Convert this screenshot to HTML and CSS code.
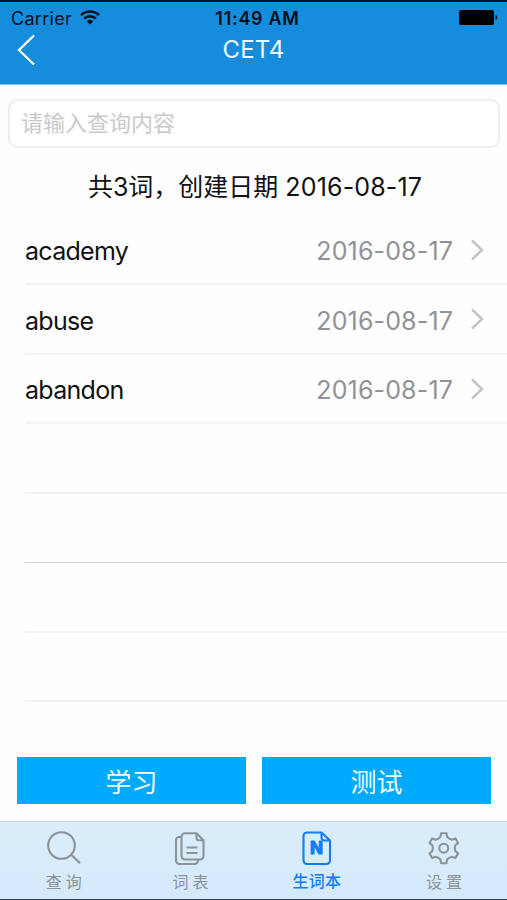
FILE: index.html
```
<!DOCTYPE html>
<html lang="zh-CN">

<head>
    <meta charset="UTF-8">
    <meta name="viewport" content="width=device-width, initial-scale=1.0">
    <title>CET4</title>
    <link rel="stylesheet" href="styles.css">
</head>

<body>
    <header class="header">
        <div class="status">
            <div class="carrier">
                <span>Carrier</span>
                <svg width="20" height="15" viewBox="0 0 20 15" fill="none" stroke="#03101c" stroke-width="2.5">
                    <path d="M1 5.200a13 13 0 0 1 18 0M4.200 8.600a8.300 8.300 0 0 1 11.600 0" />
                    <path d="M6.800 11.200a4.700 4.700 0 0 1 6.400 0L10 14.400z" fill="#03101c" stroke="none" />
                </svg>
            </div>
            <span class="time">11:49 AM</span>
            <svg class="battery" width="39" height="15" viewBox="0 0 39 15">
                <rect width="35" height="15" rx="2" />
                <path d="M36.500 5.200c2.400.7 2.400 3.900 0 4.600z" />
            </svg>
        </div>
        <div class="nav">
            <svg class="back" width="18" height="32" viewBox="0 0 18 32" fill="none" stroke="#fff" stroke-width="2.3">
                <path d="M17 1.500L2 16l15 14.500" />
            </svg>
            <h1 class="title">CET4</h1>
        </div>
    </header>

    <main class="content">
        <input class="search" type="text" placeholder="请输入查询内容">
        <p class="summary">共3词，创建日期 <span class="summary-date">2016-08-17</span></p>

        <ul class="words">
            <li class="row">
                <span class="word">academy</span>
                <span class="date">2016-08-17</span>
                <svg class="arrow" width="13" height="22" viewBox="0 0 13 22"><path d="M1 1.500L11 11 1 20.500" /></svg>
            </li>
            <li class="row">
                <span class="word">abuse</span>
                <span class="date">2016-08-17</span>
                <svg class="arrow" width="13" height="22" viewBox="0 0 13 22"><path d="M1 1.500L11 11 1 20.500" /></svg>
            </li>
            <li class="row">
                <span class="word">abandon</span>
                <span class="date">2016-08-17</span>
                <svg class="arrow" width="13" height="22" viewBox="0 0 13 22"><path d="M1 1.500L11 11 1 20.500" /></svg>
            </li>
            <li class="row"></li>
            <li class="row row-dark"></li>
            <li class="row"></li>
            <li class="row"></li>
        </ul>

        <div class="buttons">
            <button class="button" type="button">学习</button>
            <button class="button" type="button">测试</button>
        </div>
    </main>

    <nav class="tabs">
        <a class="tab">
            <svg class="icon" width="36" height="36" viewBox="0 0 36 36">
                <circle cx="16.500" cy="15.500" r="13.300" />
                <path d="M26 24.500l9 8.800" />
            </svg>
            <span class="label">查询</span>
        </a>
        <a class="tab">
            <svg class="icon" width="36" height="36" viewBox="0 0 36 36">
                <path d="M13 3.200h11.500l7 7V26a3.500 3.500 0 0 1-3.500 3.500H13A3.500 3.500 0 0 1 9.500 26V6.700A3.500 3.500 0 0 1 13 3.200z" />
                <path d="M24.500 3.200v4.500a2.500 2.500 0 0 0 2.500 2.500h4.500M14.500 17.500h11M14.500 23h11" />
                <path d="M9.500 7H7a3 3 0 0 0-3 3v20.500A3.500 3.500 0 0 0 7.500 34h15a3.500 3.500 0 0 0 3.500-3.500v-1" />
            </svg>
            <span class="label">词表</span>
        </a>
        <a class="tab active">
            <svg class="icon" width="36" height="36" viewBox="0 0 36 36">
                <path d="M8 2.500h14.500l8.500 8V30.500a3.500 3.500 0 0 1-3.500 3.500H8a3.500 3.500 0 0 1-3.500-3.500V6A3.500 3.500 0 0 1 8 2.500z" />
                <path d="M22.500 2.500v5a3 3 0 0 0 3 3H31" />
                <text class="letter" x="17.500" y="23.500" text-anchor="middle">N</text>
            </svg>
            <span class="label">生词本</span>
        </a>
        <a class="tab">
            <svg class="icon" width="36" height="36" viewBox="0 0 36 36">
                <path d="M15.100 3.200H20.500L21.100 6.900Q23 9 25.900 9.700L29.400 8.400 32.100 13 29.200 15.400Q28.300 18.200 29.200 21L32.100 23.400 29.400 28 25.900 26.700Q23 27.400 21.100 29.500L20.500 33.200H15.100L14.500 29.500Q12.600 27.400 9.700 26.700L6.200 28 3.500 23.400 6.400 21Q7.300 18.200 6.400 15.400L3.500 13 6.200 8.400 9.700 9.700Q12.600 9 14.500 6.900z" />
                <circle cx="17.800" cy="18.200" r="4.500" />
            </svg>
            <span class="label">设置</span>
        </a>
    </nav>
</body>

</html>
```
FILE: styles.css
```
* {
    margin: 0;
    padding: 0;
    box-sizing: border-box;
}

body {
    display: flex;
    flex-direction: column;
    height: 900px;
    overflow: hidden;
    background: #fefefe;
    color: #111;
    font-family: Inter, "Noto Sans CJK SC", sans-serif;
}

svg {
    display: block;
}

.header {
    height: 85px;
    border-top: 2px solid #020b18;
    border-bottom: 1px solid #86c4ef;
    background: #158ddc;
}

.status {
    display: grid;
    grid-template-columns: 1fr auto 1fr;
    align-items: center;
    height: 31px;
    padding: 1px 9px 0 11px;
    color: #03101c;
    font-size: 18px;
}

.carrier {
    display: flex;
    align-items: center;
    gap: 8px;
    letter-spacing: 0.3px;
}

.carrier svg {
    margin-top: -2px;
}

.time {
    padding-left: 6px;
    font-weight: 600;
    letter-spacing: 0.7px;
}

.battery {
    justify-self: end;
    margin-top: -1px;
    fill: #000;
}

.nav {
    display: grid;
    grid-template-columns: 18px 1fr 18px;
    align-items: center;
    height: 32px;
    padding: 0 17px;
}

.title {
    padding-top: 1px;
    color: #f3faff;
    font-size: 24px;
    font-weight: 400;
    line-height: 32px;
    letter-spacing: 0.2px;
    text-align: center;
}

.content {
    flex: 1;
}

.search {
    display: block;
    width: 492px;
    height: 49px;
    margin: 14px 0 0 8px;
    padding: 0 11px 2px;
    border: 2px solid #eee;
    border-radius: 9px;
    background: #fff;
    font-family: inherit;
    font-size: 22px;
}

.search::placeholder {
    color: #c9c9cc;
}

.summary {
    height: 67px;
    padding: 4px 0 0 3px;
    font-size: 25px;
    line-height: 70px;
    text-align: center;
    white-space: nowrap;
}

.summary-date {
    letter-spacing: 0.15px;
}

.words {
    padding-top: 0.5px;
    list-style: none;
}

.row {
    display: flex;
    align-items: center;
    height: 69.5px;
    margin-left: 25px;
    padding: 4px 23px 0 0;
    border-bottom: 2px solid #f3f3f4;
    font-size: 25px;
}

.row-dark {
    border-bottom: 1px solid #d2d2d4;
}

.word {
    letter-spacing: -0.7px;
}

.date {
    margin-left: auto;
    color: #929295;
    letter-spacing: 0.15px;
}

.arrow {
    margin: -3px 0 0 18px;
    fill: none;
    stroke: #c4c4c8;
    stroke-width: 2.5;
}

.buttons {
    display: flex;
    gap: 16px;
    padding: 54.5px 16px 0 17px;
}

.button {
    flex: 1;
    height: 47px;
    padding-top: 4px;
    border: none;
    background: #00aaff;
    color: #f3fbff;
    font-family: inherit;
    font-size: 26px;
    font-weight: 400;
    line-height: 43px;
}

.tabs {
    display: grid;
    grid-template-columns: repeat(4, 1fr);
    height: 79px;
    border-top: 1px solid #c9d9e4;
    border-bottom: 1px solid #2c4156;
    background: linear-gradient(#dbedfa, #d3eafc);
}

.tab {
    display: flex;
    flex-direction: column;
    align-items: center;
    padding-top: 8px;
    color: #8d9297;
}

.icon {
    fill: none;
    stroke: currentColor;
    stroke-width: 2.1;
    stroke-linejoin: round;
}

.label {
    margin-top: 4px;
    padding-left: 5px;
    font-size: 16px;
    font-weight: 400;
    letter-spacing: 4px;
    line-height: 24px;
}

.active {
    color: #117cf5;
}

.active .label {
    margin-top: 3px;
    padding-left: 0;
    font-weight: 500;
    letter-spacing: 0.3px;
}

.letter {
    fill: currentColor;
    stroke: currentColor;
    stroke-width: 0.8;
    font-size: 17px;
    font-weight: 800;
}
```
